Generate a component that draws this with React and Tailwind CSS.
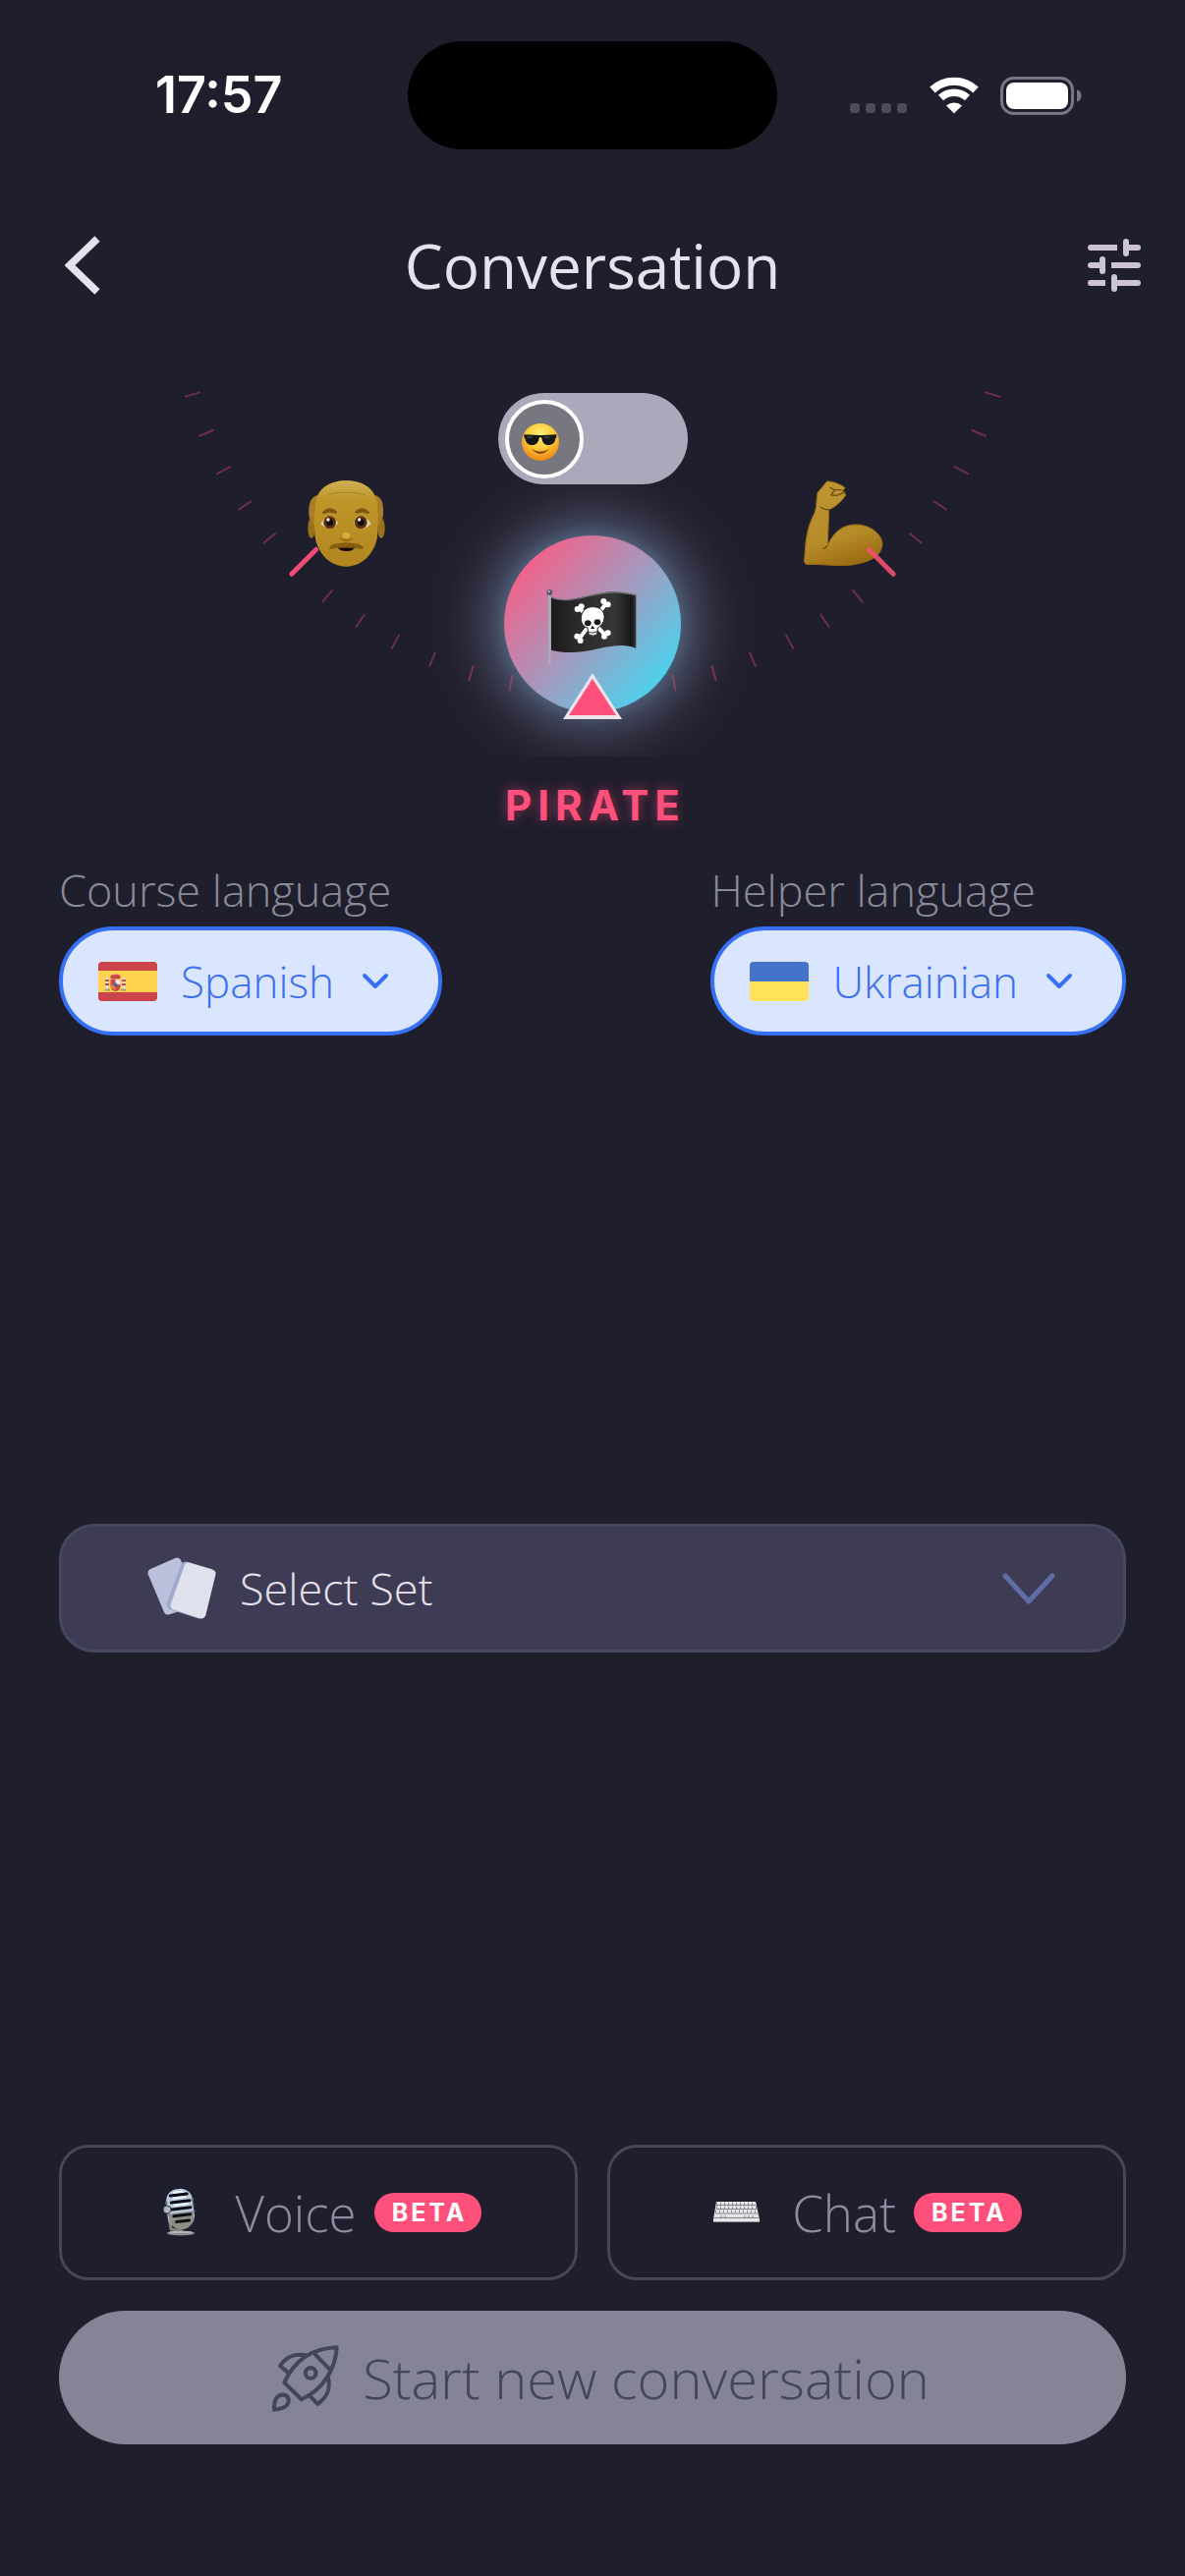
import React, { useState } from "react";

const TICKS = [16.875, 22.5, 28.125, 33.75, 39.375, 50.625, 56.25, 61.875, 67.5, 73.125, 78.75];

function polar(angle, radius, side) {
  const a = (angle * Math.PI) / 180;
  return [603 + side * radius * Math.cos(a), 278 + radius * Math.sin(a)];
}

function Tick({ angle, side, inner, width, color, opacity }) {
  const [x1, y1] = polar(angle, 433, side);
  const [x2, y2] = polar(angle, inner, side);
  return (
    <line x1={x1} y1={y1} x2={x2} y2={y2} stroke={color} strokeWidth={width} strokeOpacity={opacity} strokeLinecap="round" />
  );
}

function StatusIcons() {
  return (
    <div className="flex items-center">
      <svg width="58" height="40" viewBox="0 0 58 40" aria-hidden="true">
        {[0, 16, 32, 48].map((x) => (
          <rect key={x} x={x} y="28" width="10" height="10" rx="3" fill="#4c4b58" />
        ))}
      </svg>
      <svg className="ml-[22px]" width="52" height="40" viewBox="0 0 52 40" fill="none" stroke="#fff" aria-hidden="true">
        <path d="M4 14.500A32 32 0 0 1 48 14.500" strokeWidth="8" />
        <path d="M12.500 22.500A20 20 0 0 1 39.500 22.500" strokeWidth="7.500" />
        <path d="M26 38.500L18 30.500A12 12 0 0 1 34 30.500Z" fill="#fff" stroke="none" />
      </svg>
      <svg className="ml-[21px]" width="83" height="40" viewBox="0 0 83 40" aria-hidden="true">
        <rect x="1.500" y="2.500" width="72" height="36" rx="12" fill="none" stroke="#777682" strokeWidth="3" />
        <rect x="6" y="7" width="63" height="27" rx="8" fill="#fff" />
        <path d="M78 14.500a4.500 6 0 0 1 0 12z" fill="#777682" />
      </svg>
    </div>
  );
}

function TuneIcon() {
  return (
    <svg width="54" height="54" viewBox="0 0 54 54" fill="#ccc4d2" aria-hidden="true">
      <path d="M3 6H30V12H3a3 3 0 0 1 0-6zM42 6h9a3 3 0 0 1 0 6h-9zM3 24h9v6H3a3 3 0 0 1 0-6zM24 24h27a3 3 0 0 1 0 6H24zM3 42h15v6H3a3 3 0 0 1 0-6zM30 42h21a3 3 0 0 1 0 6H30z" />
      <rect x="36" y="0" width="6" height="18" rx="3" />
      <rect x="12" y="18" width="6" height="18" rx="3" />
      <rect x="24" y="36" width="6" height="18" rx="3" />
    </svg>
  );
}

function OldMan() {
  return (
    <g transform="translate(160 370) scale(.3333)">
      <ellipse cx="471" cy="503" rx="11" ry="31" fill="#9a721a" />
      <ellipse cx="684" cy="503" rx="11" ry="31" fill="#9a721a" />
      <path d="M577 358C622 358 650 375 664 402C685 405 694 430 689 470L668 505L487 505L464 470C459 430 469 405 490 402C505 375 532 358 577 358Z" fill="#a87f26" />
      <path d="M577 358C630 358 668 385 671 430C675 460 674 490 673 520C670 570 632 620 577 620C522 620 484 570 481 520C480 490 479 460 483 430C487 385 525 358 577 358Z" fill="url(#skin)" />
      <path d="M506 453Q526 434 549 453L545 457Q525 449 507 458ZM604 453Q626 434 646 453L645 458Q626 449 608 457Z" fill="#7c5413" stroke="#7c5413" strokeWidth="3" />
      <path d="M499 489Q525 450 553 487Q527 518 499 489ZM600 487Q627 450 653 489Q627 518 600 487Z" fill="#d9cfae" />
      <circle cx="527" cy="485" r="19" fill="#553011" />
      <circle cx="622" cy="485" r="19" fill="#553011" />
      <circle cx="527" cy="485" r="10" fill="#120d0a" />
      <circle cx="622" cy="485" r="10" fill="#120d0a" />
      <circle cx="522" cy="477" r="5" fill="#eee" />
      <circle cx="617" cy="477" r="5" fill="#eee" />
      <ellipse cx="577" cy="525" rx="12" ry="9" fill="#d9ab3a" />
      <path d="M560 535Q577 547 595 535" fill="none" stroke="#89600f" strokeWidth="4" />
      <path d="M551 562H604Q597 574 577 573Q557 573 551 562Z" fill="#130c05" />
      <path d="M526 567Q524 552 553 550Q577 543 602 550Q631 552 629 567Q577 556 526 567Z" fill="#865d12" />
      <path d="M520 400Q577 388 635 400" fill="none" stroke="#a5831f" strokeWidth="3" />
    </g>
  );
}

function Muscle() {
  return (
    <g transform="translate(600 370) scale(.3333)">
      <path
        d="M725 360C740 358 776 373 780 380L772 390Q784 396 781 404C767 424 748 440 731 446L727 555C748 508 780 491 815 492C862 493 894 526 894 551C892 590 852 609 790 616C740 618 690 611 665 614C655 612 654 602 657 590C660 520 670 490 688 455C695 430 692 412 696 395Z"
        fill="url(#arm)"
        stroke="#9a6c12"
        strokeWidth="3"
      />
      <path d="M733 378L748 386L770 386M748 386L738 402L755 403Q772 398 780 390M704 438Q720 448 732 446M727 555Q722 564 712 566" fill="none" stroke="#6e4b0d" strokeWidth="4" />
    </g>
  );
}

function PirateFlag() {
  const ends = [
    [323, 720],
    [335, 712],
    [403, 696],
    [416, 706],
    [322, 803],
    [332, 816],
    [405, 803],
    [416, 793],
  ];
  return (
    <g transform="translate(480 380) scale(.3333)">
      <rect x="234" y="672" width="8" height="218" fill="#a9abb8" />
      <circle cx="238" cy="669" r="9" fill="#555866" />
      <circle cx="236" cy="666" r="3" fill="#d7dae6" />
      <path d="M243 683C300 710 380 660 450 668C475 670 490 674 502 676L502 840C470 825 430 832 390 840C340 852 290 858 243 845Z" fill="url(#cloth)" />
      <path d="M243 684C300 711 380 661 450 669C475 671 490 675 502 677" fill="none" stroke="#77747a" strokeWidth="4" />
      <g fill="#fff">
        <path d="M330 718L411 802M410 704L330 808" stroke="#fff" strokeWidth="12" />
        {ends.map(([x, y]) => (
          <circle key={`${x}-${y}`} cx={x} cy={y} r="9" />
        ))}
        <path d="M370 713C395 713 407 730 405 748C403 765 393 771 385 777L383 797Q370 806 357 797L354 777C343 774 334 765 334 748C334 730 347 713 370 713Z" stroke="#222" strokeWidth="3" />
      </g>
      <ellipse cx="355" cy="763" rx="10" ry="9" fill="#1b1b1b" />
      <ellipse cx="384" cy="760" rx="10" ry="9" fill="#1b1b1b" />
      <path d="M369 770L376 780L363 780Z" fill="#1b1b1b" />
      <path d="M356 790Q369 796 383 789" stroke="#333" strokeWidth="3" fill="none" />
    </g>
  );
}

function Dial() {
  return (
    <svg className="w-[840px]" viewBox="183 390 840 380" role="img" aria-label="Personality dial, pirate selected">
      <defs>
        <linearGradient id="orb" x1="0.1" y1="0.2" x2="0.85" y2="0.85">
          <stop offset="0" stopColor="#f0638b" />
          <stop offset="0.500" stopColor="#a698bd" />
          <stop offset="1" stopColor="#4fd0ec" />
        </linearGradient>
        <radialGradient id="glow">
          <stop offset="0.500" stopColor="#6883a3" stopOpacity="0.680" />
          <stop offset="0.600" stopColor="#667393" stopOpacity="0.420" />
          <stop offset="0.740" stopColor="#625d76" stopOpacity="0.200" />
          <stop offset="0.880" stopColor="#55455d" stopOpacity="0.060" />
          <stop offset="1" stopColor="#55455d" stopOpacity="0" />
        </radialGradient>
        <linearGradient id="skin" x1="0" y1="0" x2="0" y2="1">
          <stop offset="0" stopColor="#cfb055" />
          <stop offset="0.220" stopColor="#bf962a" />
          <stop offset="1" stopColor="#b0851f" />
        </linearGradient>
        <linearGradient id="arm" x1="0.200" y1="0" x2="0.500" y2="1">
          <stop offset="0" stopColor="#bf9634" />
          <stop offset="0.700" stopColor="#b58a28" />
          <stop offset="1" stopColor="#9c6d14" />
        </linearGradient>
        <linearGradient id="cloth">
          <stop offset="0" stopColor="#1a1a1a" />
          <stop offset="0.300" stopColor="#2a2a2a" />
          <stop offset="0.750" stopColor="#363636" />
          <stop offset="0.950" stopColor="#161616" />
          <stop offset="1" stopColor="#3a3a3a" />
        </linearGradient>
      </defs>
      <circle cx="603" cy="635" r="172" fill="url(#glow)" />
      <Tick angle={45} side={-1} inner={398} width={5} color="#ed4b74" opacity={1} />
      <OldMan />
      <Muscle />
      <Tick angle={45} side={1} inner={398} width={5} color="#f0506f" opacity={0.9} />
      {TICKS.map((angle) => (
        <React.Fragment key={angle}>
          <Tick angle={angle} side={-1} inner={418} width={2} color="#ff4d7a" opacity={0.35} />
          <Tick angle={angle} side={1} inner={418} width={2} color="#ff4d7a" opacity={0.35} />
        </React.Fragment>
      ))}
      <circle cx="603" cy="635" r="90" fill="url(#orb)" />
      <PirateFlag />
      <path d="M603 685L633 732H573Z" fill="#ece4ec" />
      <path d="M603 691L627 728H579Z" fill="#ff4f7b" />
    </svg>
  );
}

function CoolFace() {
  return (
    <svg width="38" height="38" viewBox="151 153 114 114" aria-hidden="true">
      <defs>
        <radialGradient id="face" cx="0.500" cy="0.300" r="0.700">
          <stop offset="0" stopColor="#fff27a" />
          <stop offset="0.550" stopColor="#fcc737" />
          <stop offset="1" stopColor="#ee8413" />
        </radialGradient>
      </defs>
      <circle cx="208" cy="210" r="57" fill="url(#face)" />
      <path d="M158 187L204 189L212 189L257 187V196L254 198C253 212 244 219 233 219C219 219 213 209 212 197Q208 193 204 197C203 209 196 219 182 219C171 219 163 212 161 198L158 196Z" fill="#141618" />
      <path d="M166 195L184 195M218 195L236 195" stroke="#555b60" strokeWidth="3" />
      <path d="M181 231Q208 248 235 231Q208 260 181 231Z" fill="#7b3c06" />
    </svg>
  );
}

function SpainFlag() {
  return (
    <svg width="60" height="40" viewBox="0 0 60 40" className="shrink-0 rounded-sm" aria-hidden="true">
      <rect width="60" height="40" fill="#ffd24d" />
      <rect width="60" height="9" fill="#cb444b" />
      <rect y="31" width="60" height="9" fill="#cb444b" />
      <path d="M9 16v12M26 16v12" stroke="#eee3dc" strokeWidth="3" />
      <path d="M7 19h4M24 19h4M7 23h4M24 23h4" stroke="#c9474d" strokeWidth="2" />
      <path d="M7 28.500h5M23 28.500h5" stroke="#a79a7c" strokeWidth="2" />
      <path d="M12 15q5.500-6 11 0l-1.500 2.500h-8z" fill="#cb444b" />
      <path d="M15 12.500h5" stroke="#f5dccb" strokeWidth="1.500" strokeDasharray="1.500 1" />
      <path d="M12.500 18h10v7a5 5 0 0 1-10 0z" fill="#cb444b" />
      <path d="M17.500 18h5v5h-5z" fill="#f4e8ee" />
      <path d="M12.500 23.500h5v5a5 5 0 0 1-5-4z" fill="#d98a35" />
      <circle cx="17.500" cy="23.500" r="2" fill="#4a5fae" />
    </svg>
  );
}

function UkraineFlag() {
  return (
    <svg width="60" height="40" viewBox="0 0 60 40" className="shrink-0 rounded-sm" aria-hidden="true">
      <rect width="60" height="20" fill="#4373cb" />
      <rect y="20" width="60" height="20" fill="#ffe15a" />
    </svg>
  );
}

function LanguageField({ id, label, value, flag }) {
  return (
    <div className="flex flex-col">
      <label htmlFor={id} className="text-[45px] leading-[56px] text-[#8b8a98]">
        {label}
      </label>
      <div className="mt-[9px] flex h-[111px] items-center self-start rounded-full border-4 border-[#3670f5] bg-[#dae5ff] pl-9 pr-[50px] text-[#3d70f0]">
        {flag}
        <select id={id} defaultValue={value} className="ml-6 appearance-none bg-transparent text-[44px] leading-[60px] outline-none [field-sizing:content]">
          <option>{value}</option>
        </select>
        <svg className="ml-7 shrink-0" width="28" height="18" viewBox="0 0 28 18" fill="none" stroke="#3670f5" strokeWidth="4" strokeLinecap="round" strokeLinejoin="round" aria-hidden="true">
          <path d="M3 3L14 14L25 3" />
        </svg>
      </div>
    </div>
  );
}

function CardsIcon() {
  return (
    <svg width="70" height="64" viewBox="-1 -1 70 64" strokeLinejoin="round" aria-hidden="true">
      <path d="M4 15L29 4L45 45L20 53Z" fill="#bcc0dc" stroke="#bcc0dc" strokeWidth="9" />
      <path d="M39 9L63 16L53 56L25 47Z" fill="#a0a9cc" stroke="#a0a9cc" strokeWidth="11" transform="translate(-1 0)" />
      <path d="M41 9L64 16L54 57L27 48Z" fill="#dfe1ec" stroke="#dfe1ec" strokeWidth="9" />
    </svg>
  );
}

function MicIcon() {
  return (
    <svg width="50" height="50" viewBox="0 0 50 50" aria-hidden="true">
      <path d="M13 24L16 42L28 44" fill="none" stroke="#84827c" strokeWidth="3" />
      <g transform="rotate(-7 25 21)">
        <rect x="12" y="1" width="27" height="40" rx="12" fill="#b9c9dd" />
        <path d="M13 25H38V30a12 12 0 0 1-25 0z" fill="#8e8c83" />
        <path d="M17 7H34M17 14H36M17 21H36M18 28H35M20 34H33" stroke="#0b0e14" strokeWidth="3" strokeLinecap="round" />
        <path d="M12 12V30M39 12V30" stroke="#66717d" strokeWidth="2" strokeDasharray="3 3" />
        <path d="M20 4H31M19 10H33M19 17H34" stroke="#edf6ff" strokeWidth="2" />
      </g>
      <circle cx="12" cy="22" r="4" fill="#aeb6bf" stroke="#343a43" />
      <ellipse cx="26" cy="46" rx="14" ry="2.500" fill="#8e8e8c" />
      <path d="M15 45H37" stroke="#d7d9d9" strokeWidth="1" />
    </svg>
  );
}

function KeyboardIcon() {
  return (
    <svg width="50" height="50" viewBox="0 0 50 50" aria-hidden="true">
      <path d="M5 14H45L49 32V35H2V32Z" fill="#e6e6e8" />
      <path d="M5 17.500H45M5 21.500H46M4 26H47M3 30.500H48" stroke="#83838a" strokeWidth="1" />
      <path d="M5 16H45M5 20H46M4 24H47" stroke="#8f8f96" strokeWidth="3" strokeDasharray="1 3" />
      <path d="M10 28V30M14 28V30M34 28V30M38 28V30M42 28V30" stroke="#83838a" strokeWidth="1" />
      <path d="M2 34.500H49" stroke="#96969c" strokeWidth="1" />
    </svg>
  );
}

function RocketIcon() {
  return (
    <svg width="69" height="69" viewBox="48 46 206 206" fill="none" stroke="#44445a" strokeWidth="12" strokeLinejoin="round" strokeLinecap="round" aria-hidden="true">
      <path d="M88 163C108 118 150 60 247 56C244 122 205 185 140 214Z" />
      <path d="M182 78L225 122" />
      <circle cx="168" cy="134" r="16" />
      <path d="M155 80C120 74 95 82 75 112L100 133" />
      <path d="M220 145C230 180 220 205 190 228L168 206" />
      <path d="M57 245C56 215 66 200 83 200C99 200 104 214 99 226C93 241 76 244 57 245Z" />
    </svg>
  );
}

function ModeButton({ icon, children }) {
  return (
    <button type="button" className="flex h-[138px] flex-1 items-center justify-center rounded-[30px] border-3 border-[#474655] text-[51px] text-[#8d8ca2]">
      {icon}
      <span className="ml-8 leading-[64px]">{children}</span>
      <span className="ml-[18px] flex h-10 items-center rounded-full bg-[#ff4f7b] pl-[18px] pr-[15px] font-[Inter] text-[25px] font-bold leading-10 tracking-[3px] text-white">BETA</span>
    </button>
  );
}

export default function App() {
  const [alternate, setAlternate] = useState(false);
  return (
    <main className="flex min-h-screen flex-col bg-[#1f1e2c] font-['Open_Sans',sans-serif] font-light">
      <div className="grid h-[194px] grid-cols-[1fr_auto_1fr] items-center">
        <span className="pl-[158px] font-[Inter] text-[52px] font-semibold leading-[60px] text-white">17:57</span>
        <div className="h-[110px] w-[376px] rounded-full bg-black" />
        <div className="flex justify-end pr-[105px]">
          <StatusIcons />
        </div>
      </div>

      <header className="grid h-[152px] grid-cols-[1fr_auto_1fr] items-center pl-[66px] pr-[45px]">
        <div>
          <button type="button" aria-label="Back" className="block">
            <svg width="36" height="60" viewBox="0 0 36 60" fill="none" stroke="#e6e1ec" strokeWidth="7.500" aria-hidden="true">
              <path d="M33 3L5 30L33 57" />
            </svg>
          </button>
        </div>
        <h1 className="pr-[21px] text-[62px] font-normal leading-[80px] text-[#e6e1ec]">Conversation</h1>
        <div className="flex justify-end">
          <button type="button" aria-label="Settings">
            <TuneIcon />
          </button>
        </div>
      </header>

      <section className="relative mt-11 flex flex-col items-center">
        <Dial />
        <label className="absolute top-2.5 h-[93px] w-[193px] cursor-pointer rounded-full bg-[#a9a9bb] p-[7px]">
          <input
            type="checkbox"
            role="switch"
            aria-label="Personality mode"
            checked={alternate}
            onChange={(e) => setAlternate(e.target.checked)}
            className="peer sr-only"
          />
          <span className="flex size-20 items-center justify-center rounded-full border-4 border-white bg-[#77777f] pr-2 pt-1.5 peer-checked:ml-auto">
            <CoolFace />
          </span>
        </label>
        <p className="mt-5 pl-1.5 font-[Inter] text-[42px] font-bold leading-[60px] tracking-[6px] text-[#ff4f7b] [text-shadow:0_0_12px_#ff4f7b88]">PIRATE</p>
      </section>

      <section className="mt-7 flex justify-between px-[60px]">
        <LanguageField id="course" label="Course language" value="Spanish" flag={<SpainFlag />} />
        <LanguageField id="helper" label="Helper language" value="Ukrainian" flag={<UkraineFlag />} />
      </section>

      <section className="flex flex-1 items-center px-[60px] pb-1">
        <button type="button" className="flex h-[131px] w-full items-center rounded-[36px] border-3 border-[#47465f] bg-[#3d3c54] pl-[87px] pr-[69px] text-[45px] leading-[60px] text-[#e6e1ec]">
          <CardsIcon />
          <span className="ml-6">Select Set</span>
          <svg className="ml-auto" width="54" height="34" viewBox="0 0 54 34" fill="none" stroke="#5f6da6" strokeWidth="5" strokeLinecap="round" strokeLinejoin="round" aria-hidden="true">
            <path d="M3 4L27 30L51 4" />
          </svg>
        </button>
      </section>

      <footer className="flex flex-col gap-[31px] px-[60px] pb-[134px]">
        <div className="flex gap-[30px]">
          <ModeButton icon={<MicIcon />}>Voice</ModeButton>
          <ModeButton icon={<KeyboardIcon />}>Chat</ModeButton>
        </div>
        <button type="button" className="flex h-[136px] items-center justify-center gap-6 rounded-full bg-[#848496] pl-4 text-[56px] leading-[72px] text-[#44445a]">
          <RocketIcon />
          Start new conversation
        </button>
      </footer>
    </main>
  );
}
